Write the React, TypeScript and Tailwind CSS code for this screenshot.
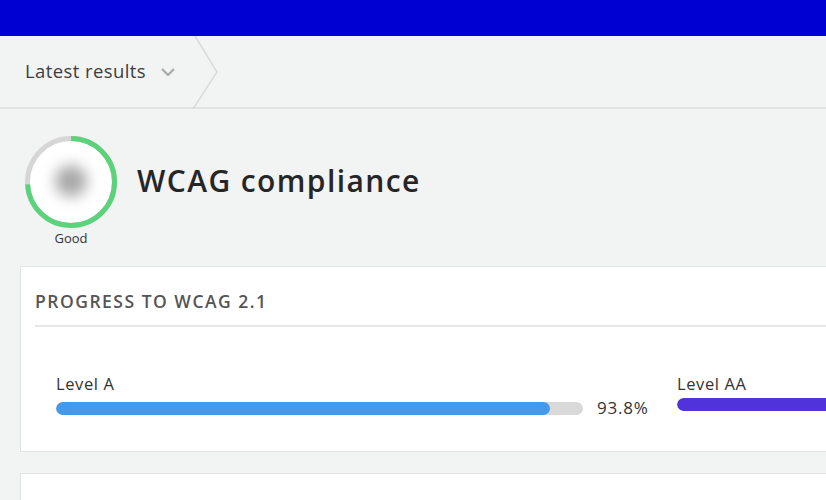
import React from "react";

const font = { fontFamily: '"Open Sans", "Lato", "Liberation Sans", sans-serif' };

interface LevelBarProps {
  label: string;
  percent: number;
  fillClass: string;
  barWidth: string;
  showValue?: boolean;
}

const LevelBar: React.FC<LevelBarProps> = ({ label, percent, fillClass, barWidth, showValue = true }) => {
  return (
    <div className="flex flex-col">
      <span className="text-[16.5px] leading-[20px] tracking-[0.6px] text-[#333]">{label}</span>
      <div className="mt-[4px] flex items-center">
        <div className={`${barWidth} h-[13px] rounded-full bg-[#d9d9d9] overflow-hidden`}>
          <div className={`h-full rounded-full ${fillClass}`} style={{ width: `${percent}%` }} />
        </div>
        {showValue && (
          <span className="ml-[14px] w-[80px] text-[17px] leading-[20px] tracking-[0.8px] text-[#333]">
            {percent}%
          </span>
        )}
      </div>
    </div>
  );
};

const Gauge: React.FC = () => {
  const r = 43.5;
  const circ = 2 * Math.PI * r;
  const value = 0.74;
  return (
    <div className="flex flex-col items-center w-[94px]">
      <div className="relative w-[94px] h-[94px]">
        <svg width="94" height="94" viewBox="0 0 94 94" className="absolute inset-0">
          <circle cx="47" cy="47" r={r} fill="#ffffff" stroke="#d6d6d6" strokeWidth="5" />
          <circle
            cx="47"
            cy="47"
            r={r}
            fill="none"
            stroke="#5cd27a"
            strokeWidth="5"
            strokeDasharray={`${circ * value} ${circ}`}
            transform="rotate(-90 47 47)"
          />
        </svg>
        {/* blurred score */}
        <div className="absolute left-[31px] top-[30px] w-[32px] h-[32px] rounded-full bg-[#a9a9a9] blur-[7px]" />
      </div>
      <span className="mt-[1px] text-[13px] leading-[16px] text-[#333]">Good</span>
    </div>
  );
};

export default function App() {
  return (
    <div className="w-[826px] h-[500px] overflow-hidden bg-[#f2f3f3]" style={font}>
      {/* Top bar */}
      <div className="h-[36px] bg-[#0000d3]" />

      {/* Breadcrumb */}
      <div className="relative h-[73px] bg-[#f2f3f3] border-b-2 border-[#e0e1e1] flex items-center">
        <div className="flex items-center pl-[25px] pb-[1px]">
          <span className="text-[18.5px] leading-[22px] tracking-[0.4px] text-[#3d3d3d]">Latest results</span>
          <svg width="16" height="10" viewBox="0 0 16 10" className="ml-[14px] mt-[1px]">
            <path d="M2 2 L8 8 L14 2" fill="none" stroke="#a9a9a9" strokeWidth="2.2" />
          </svg>
        </div>
        <svg width="30" height="73" viewBox="0 0 30 73" className="absolute left-[191px] top-0">
          <path d="M4 0 L26 36 L2 73" fill="none" stroke="#d9dada" strokeWidth="1.5" />
        </svg>
      </div>

      {/* Heading */}
      <div className="flex items-start pl-[24px] pt-[26px]">
        <Gauge />
        <h1 className="ml-[19px] mt-[29px] text-[30px] leading-[34px] font-semibold tracking-[1.4px] text-[#262626]">
          WCAG compliance
        </h1>
      </div>

      {/* Progress card */}
      <div className="ml-[20px] mt-[20px] w-[1000px] bg-white border border-[#e2e3e3]">
        <div className="mx-[14px] border-b-2 border-[#e6e7e7] pt-[23px] pb-[13px]">
          <h2 className="text-[17.5px] leading-[22px] font-semibold tracking-[1.5px] text-[#555]">
            PROGRESS TO WCAG 2.1
          </h2>
        </div>
        <div className="flex pl-[35px] pt-[47px] pb-[33px]">
          <LevelBar label="Level A" percent={93.8} fillClass="bg-[#4399ea]" barWidth="w-[527px]" />
          <LevelBar label="Level AA" percent={100} fillClass="bg-[#5133dc]" barWidth="w-[400px]" showValue={false} />
        </div>
      </div>

      {/* Next card */}
      <div className="ml-[20px] mt-[21px] w-[1000px] h-[80px] bg-white border border-[#e2e3e3]" />
    </div>
  );
}
